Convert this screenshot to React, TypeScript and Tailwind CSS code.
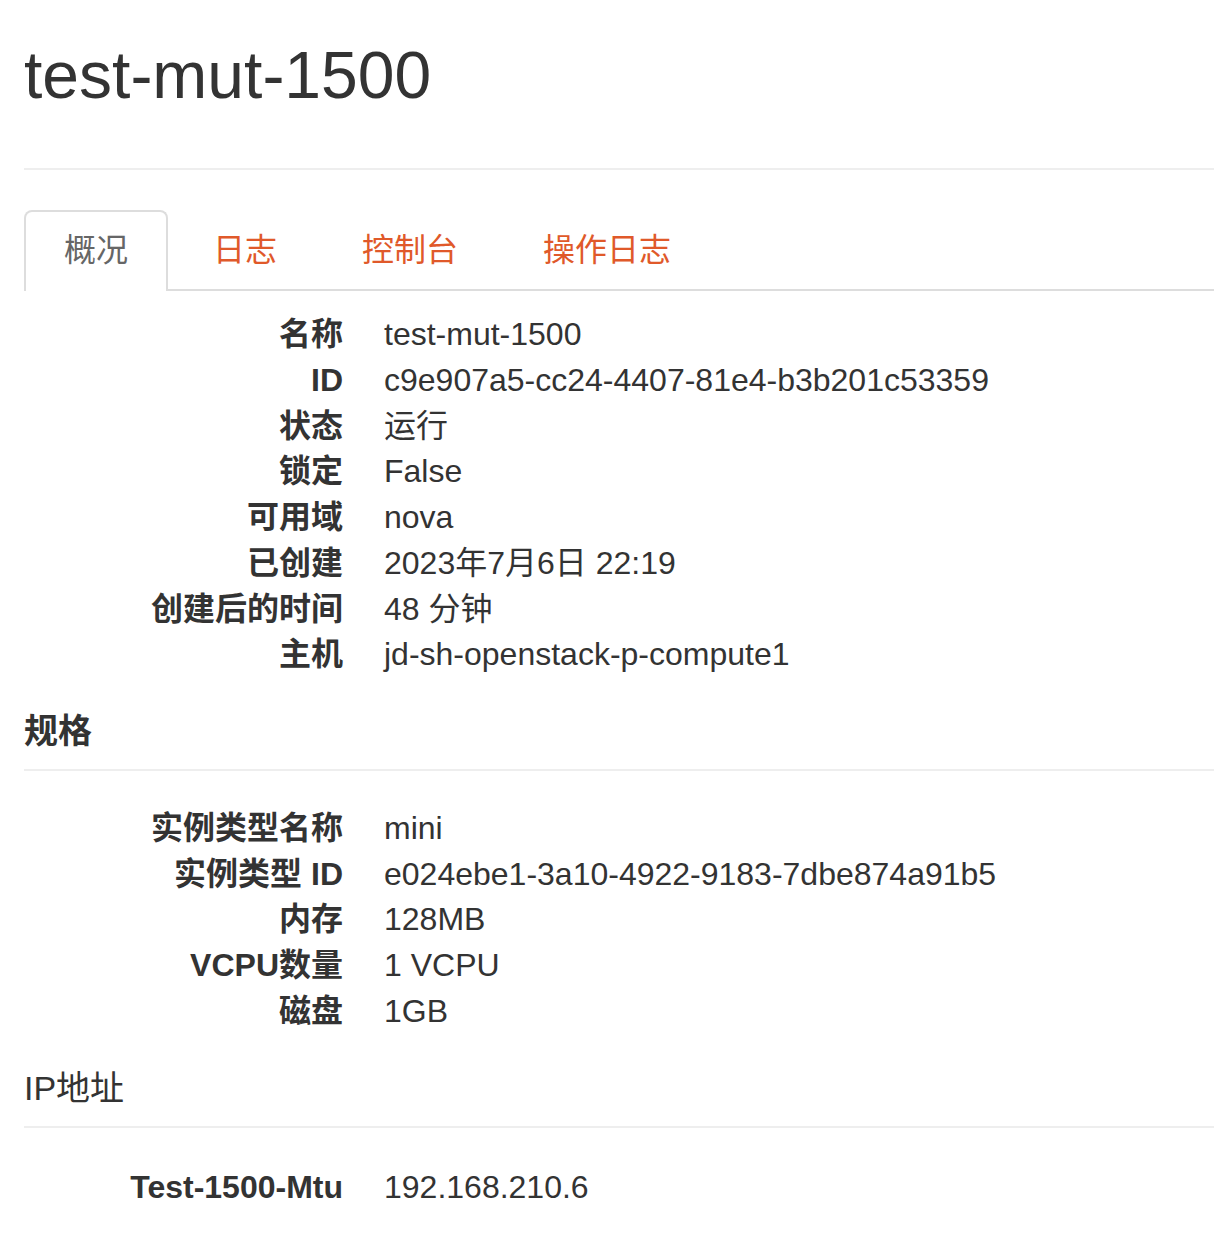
const FONT = "font-['Liberation_Sans','Noto_Sans_CJK_SC',sans-serif]";

type Row = { label: string; value: string };

const overview: Row[] = [
  { label: "名称", value: "test-mut-1500" },
  { label: "ID", value: "c9e907a5-cc24-4407-81e4-b3b201c53359" },
  { label: "状态", value: "运行" },
  { label: "锁定", value: "False" },
  { label: "可用域", value: "nova" },
  { label: "已创建", value: "2023年7月6日 22:19" },
  { label: "创建后的时间", value: "48 分钟" },
  { label: "主机", value: "jd-sh-openstack-p-compute1" },
];

const specs: Row[] = [
  { label: "实例类型名称", value: "mini" },
  { label: "实例类型 ID", value: "e024ebe1-3a10-4922-9183-7dbe874a91b5" },
  { label: "内存", value: "128MB" },
  { label: "VCPU数量", value: "1 VCPU" },
  { label: "磁盘", value: "1GB" },
];

const ips: Row[] = [{ label: "Test-1500-Mtu", value: "192.168.210.6" }];

const tabs = ["概况", "日志", "控制台", "操作日志"];

function DetailList({ rows, className }: { rows: Row[]; className?: string }) {
  return (
    <dl className={className}>
      {rows.map((r) => (
        <div key={r.label} className="flex text-[32px] leading-[45.7px]">
          <dt className="w-[319px] shrink-0 text-right font-bold">{r.label}</dt>
          <dd className="ml-[41px]">{r.value}</dd>
        </div>
      ))}
    </dl>
  );
}

export default function App() {
  return (
    <div className={`${FONT} min-h-[1238px] bg-white pl-[24px] text-[#333]`}>
      {/* Page header */}
      <div className="border-b-2 border-[#eee] pb-[56px] pt-[39px]">
        <h1 className="text-[66px] leading-[1.1]">test-mut-1500</h1>
      </div>

      {/* Tabs */}
      <ul className="mt-[40px] flex border-b-2 border-[#ddd]">
        {tabs.map((t, i) => (
          <li key={t} className="-mb-[2px] mr-[5px]">
            <span
              className={
                i === 0
                  ? "block rounded-t-[8px] border-2 border-b-0 border-[#ddd] bg-white px-[38px] pb-[18px] pt-[16px] text-[32px] leading-[45.7px] text-[#666]"
                  : "block border-2 border-transparent px-[38px] pb-[16px] pt-[16px] text-[32px] leading-[45.7px] text-[#e0592a]"
              }
            >
              {t}
            </span>
          </li>
        ))}
      </ul>

      <DetailList rows={overview} className="mt-[21px]" />

      <h4 className="mt-[35px] border-b-2 border-[#eee] pb-[19px] text-[34px] font-semibold leading-[37px]">
        规格
      </h4>
      <DetailList rows={specs} className="mt-[35px]" />

      <h4 className="mt-[36px] border-b-2 border-[#eee] pb-[19px] text-[34px] leading-[37px]">
        IP地址
      </h4>
      <DetailList rows={ips} className="mt-[37px]" />
    </div>
  );
}
